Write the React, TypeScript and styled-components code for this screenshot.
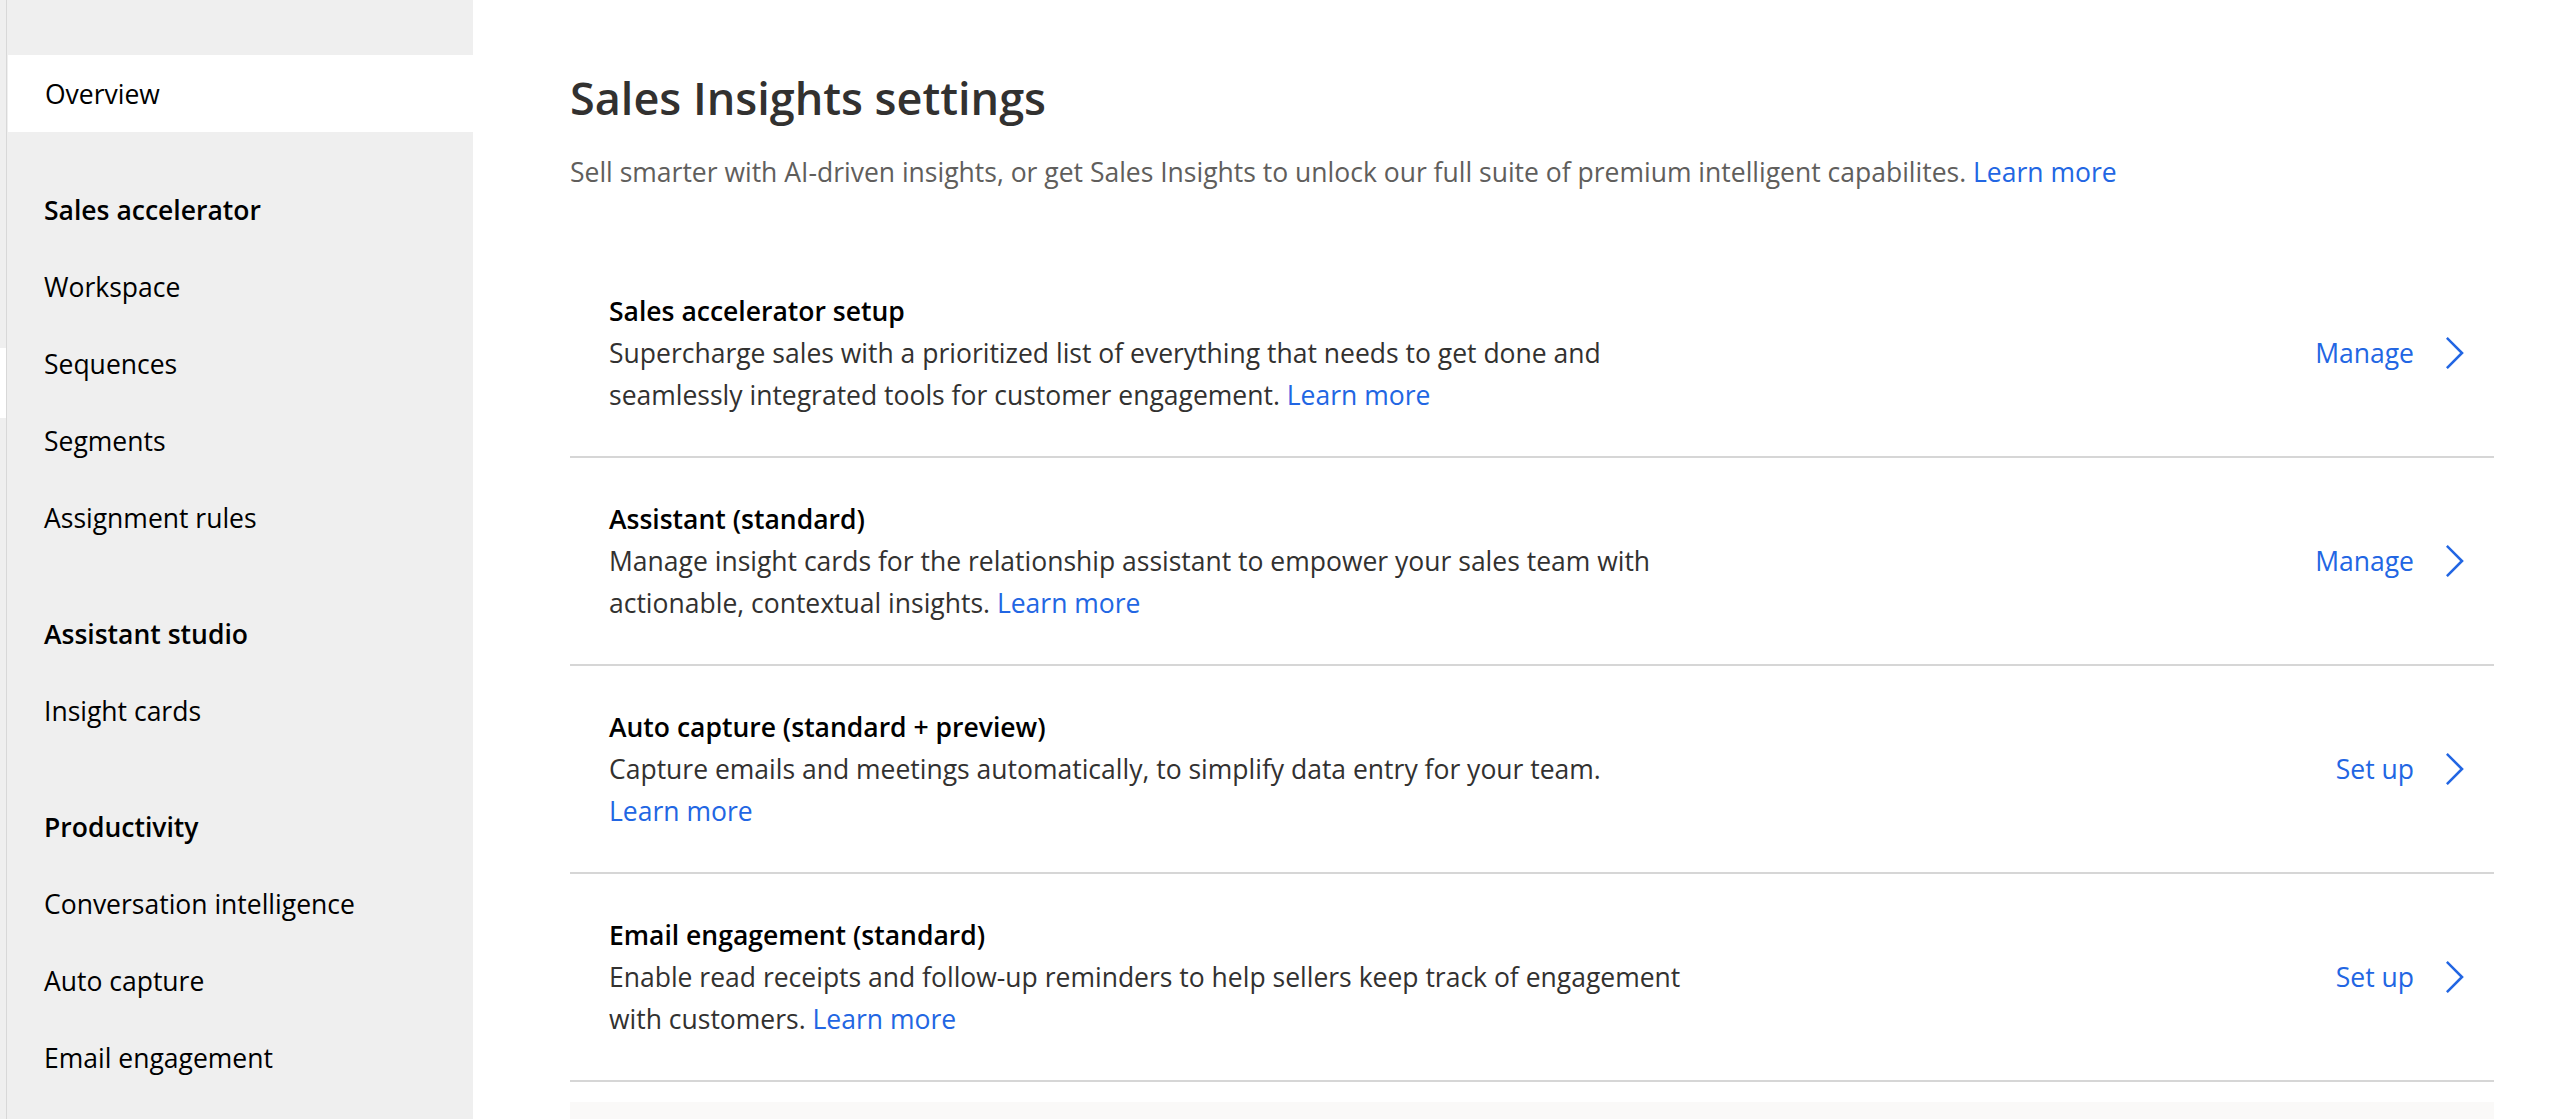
import React from "react";
import styled, { createGlobalStyle } from "styled-components";

const GlobalStyle = createGlobalStyle`
  html, body {
    margin: 0;
    padding: 0;
    background: #ffffff;
  }
  body {
    font-family: "Open Sans", "Noto Sans", "Liberation Sans", sans-serif;
    overflow: hidden;
  }
  *, *::before, *::after {
    box-sizing: border-box;
  }
`;

const Shell = styled.div`
  display: flex;
  height: 100vh;
  overflow: hidden;
`;

const Rail = styled.div`
  flex: none;
  width: 7px;
  display: flex;
  flex-direction: column;
  background: #efefef;
  border-right: 1px solid #d8d8d8;
`;

const RailMarker = styled.div`
  margin-top: 348px;
  height: 70px;
  background: #ffffff;
`;

const Sidebar = styled.nav`
  flex: none;
  width: 466px;
  background: #efefef;
  padding-top: 55px;
  display: flex;
  flex-direction: column;
`;

const NavGroup = styled.div`
  display: flex;
  flex-direction: column;
  & + & {
    margin-top: 39px;
  }
`;

const NavItem = styled.div<{ $active?: boolean; $heading?: boolean }>`
  height: 77px;
  display: flex;
  align-items: center;
  padding-left: 37px;
  font-size: 26.5px;
  color: #000000;
  font-weight: ${(p) => (p.$heading ? 600 : 400)};
  background: ${(p) => (p.$active ? "#ffffff" : "transparent")};
  margin-left: ${(p) => (p.$active ? "1px" : "0")};
  white-space: nowrap;
`;

const Main = styled.main`
  flex: 1;
  min-width: 0;
  padding: 66px 80px 0 97px;
  display: flex;
  flex-direction: column;
`;

const Heading = styled.h1`
  margin: 0;
  font-size: 45px;
  line-height: 64px;
  font-weight: 600;
  color: #323130;
`;

const Subtitle = styled.p`
  margin: 21px 0 0;
  font-size: 26.5px;
  line-height: 42px;
  color: #605e5c;
  white-space: nowrap;
`;

const Link = styled.a`
  color: #2266e3;
  text-decoration: none;
  cursor: pointer;
`;

const List = styled.div`
  margin-top: 57px;
  display: flex;
  flex-direction: column;
`;

const Row = styled.div`
  display: flex;
  align-items: center;
  justify-content: space-between;
  padding: 40px 30px 40px 39px;
  border-bottom: 2px solid #d6d6d6;
`;

const RowText = styled.div`
  max-width: 1120px;
  font-size: 26.5px;
  line-height: 42px;
`;

const RowTitle = styled.div`
  font-weight: 600;
  color: #000000;
`;

const RowDesc = styled.div`
  color: #323130;
`;

const Action = styled.a`
  display: flex;
  align-items: center;
  gap: 32px;
  color: #2266e3;
  font-size: 26.5px;
  line-height: 42px;
  text-decoration: none;
  cursor: pointer;
  white-space: nowrap;
`;

const FooterPanel = styled.div`
  margin-top: 20px;
  height: 200px;
  background: #faf9f8;
`;

const Chevron = () => (
  <svg width="18" height="32" viewBox="0 0 18 32" fill="none">
    <polyline
      points="1.8,1.8 16,16 1.8,30.2"
      stroke="#2266e3"
      strokeWidth="2.6"
      strokeLinecap="square"
      strokeLinejoin="miter"
    />
  </svg>
);

type Setting = {
  title: string;
  desc: string;
  action: string;
  linkOnNewLine?: boolean;
};

const settings: Setting[] = [
  {
    title: "Sales accelerator setup",
    desc: "Supercharge sales with a prioritized list of everything that needs to get done and seamlessly integrated tools for customer engagement.",
    action: "Manage",
  },
  {
    title: "Assistant (standard)",
    desc: "Manage insight cards for the relationship assistant to empower your sales team with actionable, contextual insights.",
    action: "Manage",
  },
  {
    title: "Auto capture (standard + preview)",
    desc: "Capture emails and meetings automatically, to simplify data entry for your team.",
    action: "Set up",
    linkOnNewLine: true,
  },
  {
    title: "Email engagement (standard)",
    desc: "Enable read receipts and follow-up reminders to help sellers keep track of engagement with customers.",
    action: "Set up",
  },
];

const navGroups: { heading?: string; items: string[] }[] = [
  { items: ["Overview"] },
  {
    heading: "Sales accelerator",
    items: ["Workspace", "Sequences", "Segments", "Assignment rules"],
  },
  { heading: "Assistant studio", items: ["Insight cards"] },
  {
    heading: "Productivity",
    items: ["Conversation intelligence", "Auto capture", "Email engagement"],
  },
];

export default function App() {
  return (
    <>
      <GlobalStyle />
      <Shell>
        <Rail>
          <RailMarker />
        </Rail>
        <Sidebar>
          {navGroups.map((g, gi) => (
            <NavGroup key={gi}>
              {g.heading && <NavItem $heading>{g.heading}</NavItem>}
              {g.items.map((item) => (
                <NavItem key={item} $active={item === "Overview"}>
                  {item}
                </NavItem>
              ))}
            </NavGroup>
          ))}
        </Sidebar>
        <Main>
          <Heading>Sales Insights settings</Heading>
          <Subtitle>
            Sell smarter with AI-driven insights, or get Sales Insights to unlock our full suite of
            premium intelligent capabilites. <Link>Learn more</Link>
          </Subtitle>
          <List>
            {settings.map((s) => (
              <Row key={s.title}>
                <RowText>
                  <RowTitle>{s.title}</RowTitle>
                  <RowDesc>
                    <span>{s.desc}</span>
                    {s.linkOnNewLine ? <br /> : " "}
                    <Link>Learn more</Link>
                  </RowDesc>
                </RowText>
                <Action>
                  {s.action}
                  <Chevron />
                </Action>
              </Row>
            ))}
          </List>
          <FooterPanel />
        </Main>
      </Shell>
    </>
  );
}
